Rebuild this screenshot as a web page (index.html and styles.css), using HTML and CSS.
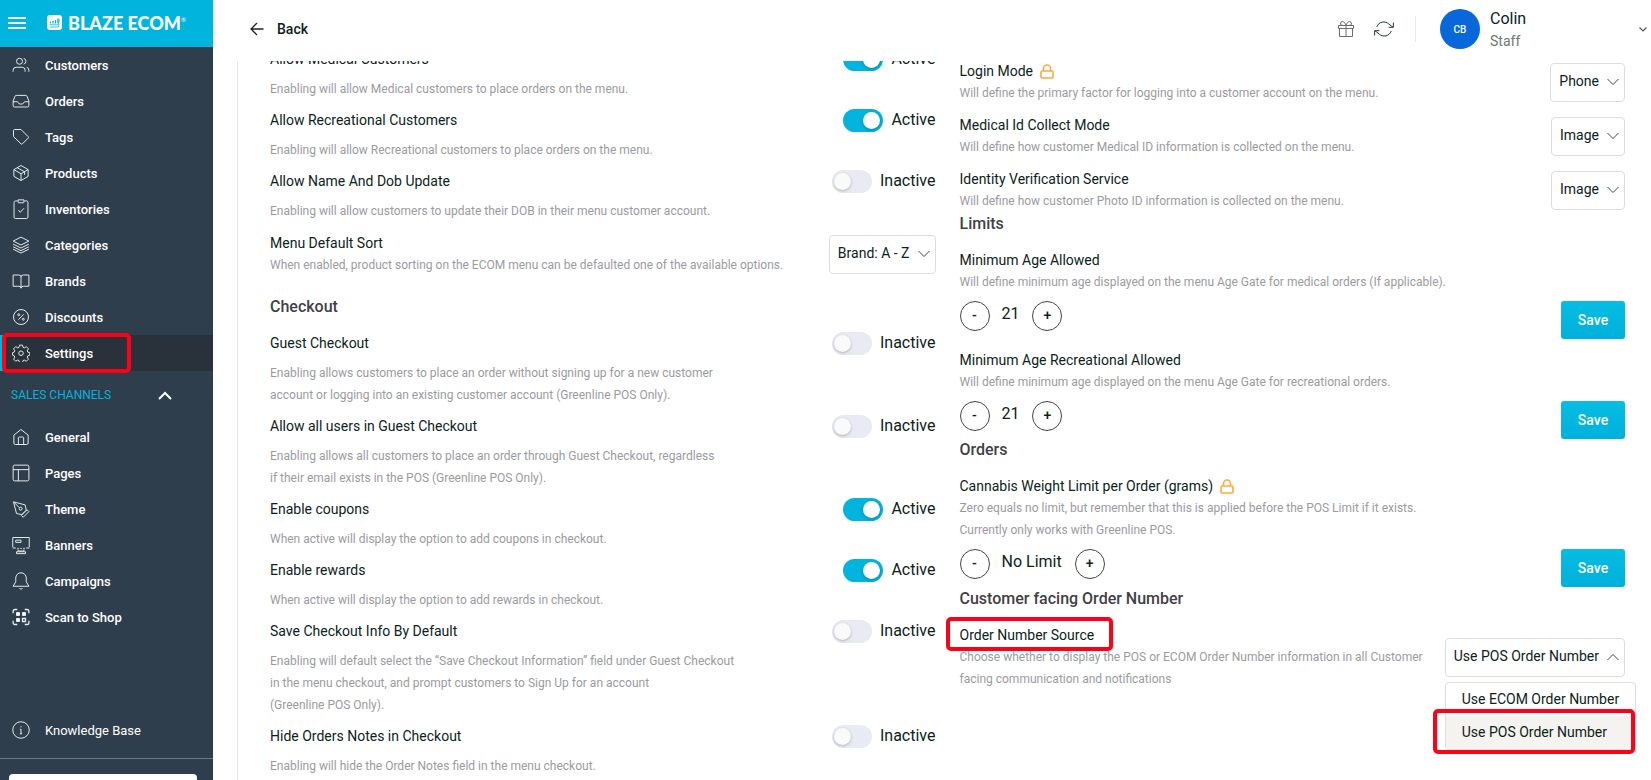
FILE: index.html
```html
<!DOCTYPE html>
<html lang="en">
<head>
    <meta charset="UTF-8">
    <meta name="viewport" content="width=device-width, initial-scale=1.0">
    <title>Blaze Ecom - Settings</title>
    <link rel="stylesheet" href="styles.css">
</head>
<body>
    <aside class="sidebar">
        <div class="brand-bar">
            <button class="icon-button menu-button" type="button" aria-label="Toggle menu">
                <svg width="18" height="12" viewBox="0 0 18 12"><path d="M0 1h18M0 6h18M0 11h18" stroke="#fff" stroke-width="2"/></svg>
            </button>
            <a class="brand" href="#">
                <svg width="15" height="15" viewBox="0 0 15 15">
                    <rect width="15" height="15" rx="3" fill="#fff"/>
                    <path d="M3.5 8.5V6.5M6 8.5V6M8.5 8.5V5M11 8.5V3.5" stroke="#00b4dd" stroke-width="1.3"/>
                    <path d="M2.5 9.8h9M3 12h8.5l.8-8" stroke="#00b4dd" stroke-width=".8" fill="none"/>
                </svg>
                <span>BLAZE ECOM<sup>&reg;</sup></span>
            </a>
        </div>

        <nav class="nav">
            <a href="#"><svg class="icon" viewBox="0 0 24 24"><circle cx="10" cy="7" r="4"/><path d="M1.5 21v-2a4 4 0 0 1 4-4h8a4 4 0 0 1 4 4v2M22.5 21v-2a4 4 0 0 0-3-3.9M15.5 3.1a4 4 0 0 1 0 7.800"/></svg>Customers</a>
            <a href="#"><svg class="icon" viewBox="0 0 24 24"><path d="M1.5 13h5.5q1 0 1.5 1.5t2 1.5h3q1.5 0 2-1.5T17 13h5.5M5.5 4.5h13q1 0 1.4 1L22.5 12v6q0 2-2 2h-17q-2 0-2-2v-6l2.6-6.5q.4-1 1.4-1z"/></svg>Orders</a>
            <a href="#"><svg class="icon" viewBox="0 0 24 24"><path d="M2 3.5q0-1.5 1.5-1.5H12l9.5 9.5q1 1 0 2l-7.5 7.5q-1 1-2 0L2 11.5z"/></svg>Tags</a>
            <a href="#"><svg class="icon" viewBox="0 0 24 24"><path d="M21.5 7.5v9L12 22l-9.5-5.5v-9L12 2zM2.5 7.5L12 13l9.5-5.5M12 13v9M7 5l9.8 5.5v4"/></svg>Products</a>
            <a href="#"><svg class="icon icon-tall" viewBox="0 0 24 30"><path d="M7.5 4H4.5q-2 0-2 2v20q0 2 2 2h15q2 0 2-2V6q0-2-2-2h-3M8 2.5h8v3q0 1-1 1H9q-1 0-1-1zM8.5 16.5l2.5 3 5-5.5"/></svg>Inventories</a>
            <a href="#"><svg class="icon" viewBox="0 0 24 24"><path d="M12 1.5L1.5 6.8 12 12l10.5-5.2zM1.5 10.8L12 16l10.5-5.2M1.5 14.3l10.5 5.2 10.5-5.2M1.5 17.5L12 22.7l10.5-5.2"/></svg>Categories</a>
            <a href="#"><svg class="icon" viewBox="0 0 24 24"><path d="M1.5 4H9q3 0 3 2.5Q12 4 15 4h7.5v15H15q-3 0-3 2.5Q12 19 9 19H1.5zM12 6.5v15"/></svg>Brands</a>
            <a href="#"><svg class="icon" viewBox="0 0 24 24"><circle cx="12" cy="12" r="10"/><path d="M15.5 8.5l-7 7"/><circle cx="9" cy="9" r="1.3"/><circle cx="15" cy="15" r="1.3"/></svg>Discounts</a>
            <a class="active" href="#"><svg class="icon" viewBox="0 0 24 24"><path d="M10 1.5h4l.7 3 1.7.7 2.7-1.6 2.8 2.8-1.6 2.7.7 1.7 2.7.7v3.5l-2.7.8-.7 1.7 1.6 2.7-2.8 2.8-2.7-1.6-1.7.7-.7 2.7h-4l-.7-2.7-1.7-.7-2.7 1.6-2.8-2.8 1.6-2.7-.7-1.7-2.2-.8v-3.5l2.2-.7.7-1.7-1.6-2.7 2.8-2.8 2.7 1.6 1.7-.7z"/><circle cx="12" cy="12.3" r="3"/></svg>Settings<span class="mark mark-settings"></span></a>
        </nav>

        <button class="nav-group" type="button">
            SALES CHANNELS
            <svg width="14" height="9" viewBox="0 0 14 9"><path d="M1 8l6-6 6 6" fill="none" stroke="#fff" stroke-width="2"/></svg>
        </button>

        <nav class="nav">
            <a href="#"><svg class="icon" viewBox="0 0 24 24"><path d="M2.5 9.5L12 2l9.5 7.5V20q0 2-2 2h-15q-2 0-2-2zM8.5 22v-9q0-1 1-1h5q1 0 1 1v9"/></svg>General</a>
            <a href="#"><svg class="icon" viewBox="0 0 24 24"><rect x="1.5" y="1.5" width="21" height="21" rx="2"/><path d="M1.5 7.5h21M8.5 7.5v15"/></svg>Pages</a>
            <a href="#"><svg class="icon" viewBox="0 0 24 24"><path d="M12.5 20.5l7.5-7.5 2.5 2.5-7.5 7.5zM19 13.5l-1.5-7L2 2.5l4 15.5 7 1.5zM2 2.5l7.5 7.5"/><circle cx="11.5" cy="11.5" r="2"/></svg>Theme</a>
            <a href="#"><svg class="icon icon-banner" viewBox="0 0 24 24"><path d="M1 15V2h22v13M5 5.500h7v3H5zM1 16h4M7 16.500h2M11 16.500h2M15 16.500h2M19 16h4M8 18v2h8v-2M6 21h12v2.500H6z"/></svg>Banners</a>
            <a href="#"><svg class="icon" viewBox="0 0 24 24"><path d="M5 13V8a7 7 0 0 1 14 0v5l3.500 6h-21zM10 22q2 1.800 4 0"/></svg>Campaigns</a>
            <a href="#"><svg class="icon" viewBox="0 0 24 24"><g stroke-width="1.7"><path d="M1.5 7V4.5q0-2.500 2.500-2.500h3M17 2h3q2.500 0 2.500 2.500V7M22.500 17v2.500q0 2.500-2.500 2.500h-3M7 22H4q-2.500 0-2.500-2.500V17M14 14h4v4h-4z"/></g><path d="M6 6h4v4H6zM14 6h4v4h-4zM6 14h4v4H6z" fill="#fff"/></svg>Scan to Shop</a>
        </nav>

        <a class="knowledge" href="#"><svg class="icon" viewBox="0 0 24 24"><circle cx="12" cy="12" r="11"/><path d="M10.500 11h1.500v6M10.500 17h3M12 7v1.500"/></svg>Knowledge Base</a>
        <div class="sidebar-footer"><button type="button" aria-label="Shop menu"></button></div>
    </aside>

    <main class="main">
        <header class="topbar">
            <a class="back" href="#">
                <svg width="14" height="14" viewBox="0 0 14 14"><path d="M13.5 7H1M7 1L1 7l6 6" fill="none" stroke="#222" stroke-width="1.3"/></svg>
                Back
            </a>
            <div class="tools">
                <button class="icon-button" type="button" aria-label="Rewards">
                    <svg width="18" height="18" viewBox="0 0 18 18" fill="none" stroke="#6c6c6c"><path d="M1.5 5.5h15v3h-15zM2.5 8.5v8h13v-8M9 5.5v11M9 5Q7.5 1.5 5.500 1.5T3.500 4q.5 1.5 2.500 1.500M9 5q1.500-3.500 3.500-3.500t2 2.500q-.5 1.500-2.500 1.500"/></svg>
                </button>
                <button class="icon-button" type="button" aria-label="Refresh">
                    <svg width="20" height="18" viewBox="0 0 20 18" fill="none" stroke="#213a33"><path d="M19.4 2.5v4.800h-4.800M.6 15.500v-4.800h4.800M2.800 7A7.300 7.300 0 0 1 15 4.200l4 3M17.200 11A7.300 7.300 0 0 1 5 13.800l-4-3"/></svg>
                </button>
            </div>
            <button class="user" type="button">
                <span class="avatar">CB</span>
                <span class="user-text"><span class="user-name">Colin</span><span class="user-role">Staff</span></span>
                <svg width="8" height="5" viewBox="0 0 8 5"><path d="M.5.5L4 4 7.5.5" fill="none" stroke="#555" stroke-width="1.2"/></svg>
            </button>
        </header>

        <div class="settings">
            <section class="column column-left">
                <div class="row switch-row">
                    <div class="info">
                        <label for="medical">Allow Medical Customers</label>
                        <p>Enabling will allow Medical customers to place orders on the menu.</p>
                    </div>
                    <div class="switch"><input type="checkbox" id="medical" checked><span>Active</span></div>
                </div>
                <div class="row switch-row">
                    <div class="info">
                        <label for="recreational">Allow Recreational Customers</label>
                        <p>Enabling will allow Recreational customers to place orders on the menu.</p>
                    </div>
                    <div class="switch"><input type="checkbox" id="recreational" checked><span>Active</span></div>
                </div>
                <div class="row switch-row">
                    <div class="info">
                        <label for="dob">Allow Name And Dob Update</label>
                        <p>Enabling will allow customers to update their DOB in their menu customer account.</p>
                    </div>
                    <div class="switch"><input type="checkbox" id="dob"><span>Inactive</span></div>
                </div>
                <div class="row select-row">
                    <div class="info">
                        <label for="sort">Menu Default Sort</label>
                        <p>When enabled, product sorting on the ECOM menu can be defaulted one of the available options.</p>
                    </div>
                    <div class="select">
                        <select id="sort"><option>Brand: A - Z</option></select>
                        <svg width="12" height="8" viewBox="0 0 12 8"><path d="M.5 1L6 6.5 11.5 1"/></svg>
                    </div>
                </div>

                <h2>Checkout</h2>
                <div class="row switch-row">
                    <div class="info">
                        <label for="guest">Guest Checkout</label>
                        <p>Enabling allows customers to place an order without signing up for a new customer<br>account or logging into an existing customer account (Greenline POS Only).</p>
                    </div>
                    <div class="switch"><input type="checkbox" id="guest"><span>Inactive</span></div>
                </div>
                <div class="row switch-row">
                    <div class="info">
                        <label for="all-guests">Allow all users in Guest Checkout</label>
                        <p>Enabling allows all customers to place an order through Guest Checkout, regardless<br>if their email exists in the POS (Greenline POS Only).</p>
                    </div>
                    <div class="switch"><input type="checkbox" id="all-guests"><span>Inactive</span></div>
                </div>
                <div class="row switch-row">
                    <div class="info">
                        <label for="coupons">Enable coupons</label>
                        <p>When active will display the option to add coupons in checkout.</p>
                    </div>
                    <div class="switch"><input type="checkbox" id="coupons" checked><span>Active</span></div>
                </div>
                <div class="row switch-row">
                    <div class="info">
                        <label for="rewards">Enable rewards</label>
                        <p>When active will display the option to add rewards in checkout.</p>
                    </div>
                    <div class="switch"><input type="checkbox" id="rewards" checked><span>Active</span></div>
                </div>
                <div class="row switch-row">
                    <div class="info">
                        <label for="save-info">Save Checkout Info By Default</label>
                        <p>Enabling will default select the “Save Checkout Information” field under Guest Checkout<br>in the menu checkout, and prompt customers to Sign Up for an account<br>(Greenline POS Only).</p>
                    </div>
                    <div class="switch"><input type="checkbox" id="save-info"><span>Inactive</span></div>
                </div>
                <div class="row switch-row">
                    <div class="info">
                        <label for="hide-notes">Hide Orders Notes in Checkout</label>
                        <p>Enabling will hide the Order Notes field in the menu checkout.</p>
                    </div>
                    <div class="switch"><input type="checkbox" id="hide-notes"><span>Inactive</span></div>
                </div>
            </section>

            <section class="column column-right">
                <div class="row select-row">
                    <div class="info">
                        <label for="login">Login Mode <svg class="lock" width="14" height="15" viewBox="0 0 14 15"><rect x="1" y="7" width="12" height="7" rx="1"/><path d="M3.5 7V4.5a3.5 3.5 0 0 1 7 0V7"/></svg></label>
                        <p>Will define the primary factor for logging into a customer account on the menu.</p>
                    </div>
                    <div class="select">
                        <select id="login"><option>Phone</option></select>
                        <svg width="12" height="8" viewBox="0 0 12 8"><path d="M.5 1L6 6.5 11.5 1"/></svg>
                    </div>
                </div>
                <div class="row select-row">
                    <div class="info">
                        <label for="medical-id">Medical Id Collect Mode</label>
                        <p>Will define how customer Medical ID information is collected on the menu.</p>
                    </div>
                    <div class="select">
                        <select id="medical-id"><option>Image</option></select>
                        <svg width="12" height="8" viewBox="0 0 12 8"><path d="M.5 1L6 6.5 11.5 1"/></svg>
                    </div>
                </div>
                <div class="row select-row">
                    <div class="info">
                        <label for="identity">Identity Verification Service</label>
                        <p>Will define how customer Photo ID information is collected on the menu.</p>
                    </div>
                    <div class="select">
                        <select id="identity"><option>Image</option></select>
                        <svg width="12" height="8" viewBox="0 0 12 8"><path d="M.5 1L6 6.5 11.5 1"/></svg>
                    </div>
                </div>

                <h2>Limits</h2>
                <div class="limit">
                    <h3>Minimum Age Allowed</h3>
                    <p>Will define minimum age displayed on the menu Age Gate for medical orders (If applicable).</p>
                    <div class="stepper">
                        <button class="step" type="button">-</button>
                        <output>21</output>
                        <button class="step" type="button">+</button>
                        <button class="save" type="button">Save</button>
                    </div>
                </div>
                <div class="limit">
                    <h3>Minimum Age Recreational Allowed</h3>
                    <p>Will define minimum age displayed on the menu Age Gate for recreational orders.</p>
                    <div class="stepper">
                        <button class="step" type="button">-</button>
                        <output>21</output>
                        <button class="step" type="button">+</button>
                        <button class="save" type="button">Save</button>
                    </div>
                </div>

                <h2 class="tight">Orders</h2>
                <div class="limit">
                    <h3>Cannabis Weight Limit per Order (grams) <svg class="lock" width="14" height="15" viewBox="0 0 14 15"><rect x="1" y="7" width="12" height="7" rx="1"/><path d="M3.5 7V4.5a3.5 3.5 0 0 1 7 0V7"/></svg></h3>
                    <p>Zero equals no limit, but remember that this is applied before the POS Limit if it exists.<br>Currently only works with Greenline POS.</p>
                    <div class="stepper">
                        <button class="step" type="button">-</button>
                        <output>No Limit</output>
                        <button class="step" type="button">+</button>
                        <button class="save" type="button">Save</button>
                    </div>
                </div>

                <h2>Customer facing Order Number</h2>
                <div class="row select-row">
                    <div class="info">
                        <label class="marked" for="source">Order Number Source<span class="mark mark-source"></span></label>
                        <p>Choose whether to display the POS or ECOM Order Number information in all Customer<br>facing communication and notifications</p>
                    </div>
                    <div class="select">
                        <select id="source"><option>Use ECOM Order Number</option><option selected>Use POS Order Number</option></select>
                        <svg width="12" height="8" viewBox="0 0 12 8"><path d="M.5 7L6 1.5 11.5 7"/></svg>
                        <ul class="options">
                            <li>Use ECOM Order Number</li>
                            <li class="selected">Use POS Order Number<span class="mark mark-option"></span></li>
                        </ul>
                    </div>
                </div>
            </section>
        </div>
    </main>
</body>
</html>
```
FILE: styles.css
```css
* {
    box-sizing: border-box;
}

body {
    margin: 0;
    display: flex;
    height: 100vh;
    overflow: hidden;
    font-family: Roboto, "Liberation Sans", sans-serif;
    font-size: 14px;
    color: #0b2319;
    background-color: #fff;
}

h2, h3, p, ul {
    margin: 0;
    padding: 0;
}

a {
    color: inherit;
    text-decoration: none;
}

button, select {
    font-family: inherit;
    color: inherit;
    cursor: pointer;
}

svg {
    display: block;
    flex-shrink: 0;
}

.icon-button {
    padding: 0;
    border: 0;
    background: none;
}

/* Sidebar */
.sidebar {
    display: flex;
    flex-direction: column;
    width: 213px;
    flex-shrink: 0;
    background-color: #2f3e4d;
    color: #fff;
}

.brand-bar {
    display: flex;
    align-items: center;
    gap: 21px;
    height: 47px;
    flex-shrink: 0;
    padding: 0 8px 2px;
    background-color: #00b4dd;
}

.brand {
    display: flex;
    align-items: center;
    gap: 6px;
    font-family: Lato, sans-serif;
    font-size: 18px;
    font-weight: 900;
}

.brand sup {
    font-size: 6px;
    vertical-align: 8px;
    line-height: 0;
    font-weight: 400;
}

.nav a,
.knowledge {
    position: relative;
    display: flex;
    align-items: center;
    gap: 15px;
    height: 36px;
    padding: 0 12px;
    font-size: 13px;
    font-weight: 500;
}

.nav a.active {
    background-color: #29323a;
    box-shadow: inset 3px 0 #00b4dd;
}

.icon {
    width: 18px;
    height: 18px;
    fill: none;
    stroke: #e8edf0;
    stroke-width: 1.3;
}

.icon-tall {
    height: 22px;
}

.icon-banner {
    overflow: visible;
}

.nav-group {
    display: flex;
    align-items: center;
    justify-content: space-between;
    height: 48px;
    padding: 0 41px 0 11px;
    border: 0;
    background: none;
    color: #00b4dd;
    font-size: 12px;
}

.knowledge {
    margin-top: auto;
    font-weight: 400;
}

.sidebar-footer {
    height: 22px;
    flex-shrink: 0;
    margin-top: 10px;
    padding: 15px 16px 0 9px;
    border-top: 1px solid #6b7782;
    overflow: hidden;
}

.sidebar-footer button {
    display: block;
    width: 100%;
    height: 36px;
    border: 0;
    border-radius: 4px;
    background-color: #fff;
}

/* Top bar */
.main {
    display: flex;
    flex-direction: column;
    flex: 1;
    min-width: 0;
}

.topbar {
    display: flex;
    align-items: center;
    height: 61px;
    flex-shrink: 0;
    padding: 0 4px 3px 37px;
}

.back {
    display: flex;
    align-items: center;
    gap: 13px;
    font-weight: 500;
}

.tools {
    display: flex;
    align-items: center;
    gap: 19px;
    height: 26px;
    margin-left: auto;
    padding-right: 21px;
    border-right: 1px solid #e6e9f0;
}

.user {
    display: flex;
    align-items: center;
    gap: 10px;
    width: 207px;
    margin-left: 24px;
    padding: 0;
    border: 0;
    background: none;
    text-align: left;
}

.avatar {
    display: flex;
    align-items: center;
    justify-content: center;
    width: 40px;
    height: 40px;
    border-radius: 50%;
    background-color: #0867d9;
    color: #fff;
    font-size: 10px;
    font-weight: 500;
}

.user-text {
    display: flex;
    flex-direction: column;
    margin-right: auto;
    padding-top: 2px;
    line-height: 22px;
}

.user-name {
    font-size: 16px;
}

.user-role {
    font-size: 14px;
    color: #6f7673;
}

/* Settings, shown scrolled past the first rows */
.settings {
    display: grid;
    grid-template-columns: 1fr 1fr;
    gap: 24px;
    flex: 1;
    min-height: 0;
    margin-left: 24px;
    padding: 0 26px 0 32px;
    border-left: 1px solid #e6e6ea;
    overflow: hidden;
}

.column {
    min-width: 0;
}

.column-left {
    margin-top: -13px;
}

.column-right {
    margin-top: -1px;
}

.row {
    display: flex;
    justify-content: space-between;
    align-items: flex-start;
}

.info label,
.limit h3 {
    display: flex;
    align-items: center;
    gap: 7px;
    width: fit-content;
    font-size: 14px;
    font-weight: 400;
    line-height: 22px;
}

.info p,
.limit p {
    font-size: 12px;
    line-height: 22px;
    color: #9b9b9f;
    white-space: nowrap;
}

.switch-row {
    padding-bottom: 9px;
}

.switch-row p {
    margin-top: 8px;
}

.select-row {
    align-items: center;
}

.select-row + .select-row,
.limit + .limit {
    margin-top: 10px;
}

.switch-row + .select-row {
    margin-top: 1px;
}

h2 {
    font-size: 16px;
    font-weight: 500;
    line-height: 24px;
    color: #3f4144;
    margin-bottom: 13px;
}

.column-left h2 {
    margin-top: 19px;
}

h2.tight {
    margin-top: -1px;
}

/* Switches */
.switch {
    display: flex;
    align-items: center;
    gap: 8px;
    height: 22px;
    font-size: 16px;
    line-height: 20px;
}

.switch input {
    appearance: none;
    width: 40px;
    height: 23px;
    margin: 0;
    padding: 3px 2px;
    border-radius: 12px;
    background-color: #e9ebf4;
}

.switch input::before {
    content: "";
    display: block;
    width: 17px;
    height: 17px;
    border-radius: 50%;
    background-color: #fafafa;
    box-shadow: 0 1px 3px rgba(0, 0, 0, 0.25);
}

.switch input:checked {
    padding-right: 3px;
    background-color: #00b4dd;
}

.switch input:checked::before {
    margin-left: auto;
    background-color: #fff;
}

/* Selects */
.select {
    position: relative;
    display: flex;
}

.select select {
    appearance: none;
    field-sizing: content;
    height: 39px;
    padding: 0 25px 2px 8px;
    border: 1px solid #deded8;
    border-radius: 4px;
    background-color: #fff;
    font-size: 14px;
}

.select svg {
    position: absolute;
    top: 15px;
    right: 6px;
    fill: none;
    stroke: #444;
    pointer-events: none;
}

.options {
    position: absolute;
    top: 44px;
    left: 0;
    z-index: 5;
    list-style: none;
    border: 1px solid #deded8;
    border-radius: 4px;
    background-color: #fff;
    white-space: nowrap;
}

.options li {
    position: relative;
    padding: 0 16px;
    line-height: 33px;
}

.options .selected {
    background-color: #f5f3f0;
}

/* Limits */
.stepper {
    display: flex;
    align-items: flex-start;
    margin-top: 8px;
}

.stepper output {
    margin: 0 13px 0 12px;
    font-size: 16px;
    line-height: 26px;
}

.step {
    width: 30px;
    height: 30px;
    padding: 0 0 3px;
    border: 1px solid #444;
    border-radius: 50%;
    background-color: #fff;
    font-size: 14px;
    font-weight: 500;
}

.save {
    margin-left: auto;
    width: 64px;
    height: 38px;
    border: 0;
    border-radius: 3px;
    background: linear-gradient(#06bde3, #00b0db);
    color: #fff;
    font-size: 14px;
    font-weight: 500;
}

.lock {
    fill: none;
    stroke: #ffa940;
    stroke-width: 1.6;
}

/* Red highlight frames */
.marked {
    position: relative;
}

.mark {
    position: absolute;
    z-index: 6;
    border: 4px solid #ff0019;
    border-radius: 5px;
    pointer-events: none;
}

.mark-settings {
    top: -2px;
    bottom: -2px;
    left: 2px;
    width: 129px;
}

.mark-source {
    inset: -7px -19px -5px -14px;
}

.mark-option {
    inset: -7px 0 -5px -13px;
}
```
